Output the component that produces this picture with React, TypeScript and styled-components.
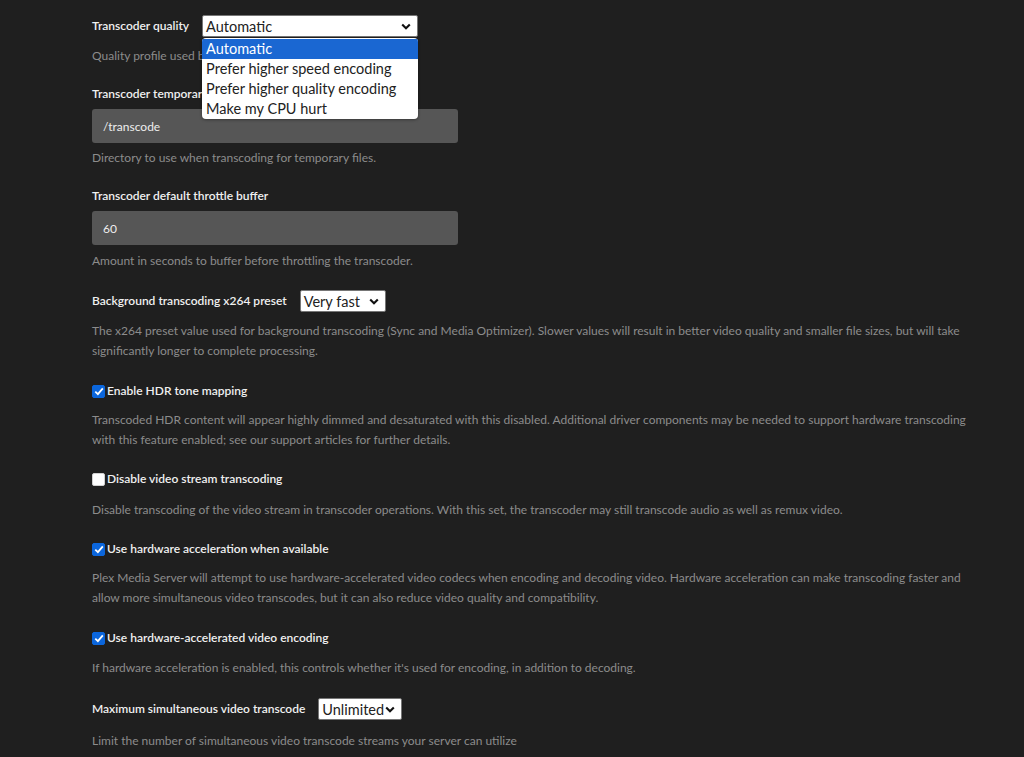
import { createGlobalStyle } from 'styled-components'
import styled from 'styled-components'

const GlobalStyle = createGlobalStyle`
    html, body {
        margin: 0;
        padding: 0;
        background: #1f1f1f;
    }
    body {
        font-family: Lato, "Open Sans", sans-serif;
        -webkit-font-smoothing: antialiased;
    }
`

const Page = styled.div`
    min-height: 757px;
    box-sizing: border-box;
    padding: 15px 0 0 92px;
    width: 985px;
    position: relative;
`

const Field = styled.div<{ $space?: number }>`
    display: flex;
    flex-direction: column;
    margin-bottom: ${p => p.$space ?? 19}px;
`

const Row = styled.div`
    display: flex;
    align-items: center;
    gap: 13px;
    height: 22px;
`

const Label = styled.label`
    display: flex;
    align-items: center;
    gap: 2px;
    color: #f0f0f0;
    font-size: 12px;
    font-weight: 600;
    line-height: 20px;
`

const Description = styled.div<{ $gap?: number }>`
    margin-top: ${p => p.$gap ?? 9}px;
    color: #8c8c8c;
    font-size: 12px;
    line-height: 20px;
`

const TextInput = styled.div`
    margin-top: 5px;
    width: 366px;
    height: 34px;
    box-sizing: border-box;
    padding: 0 11px;
    display: flex;
    align-items: center;
    background: #565656;
    border-radius: 3px;
    color: #eeeeee;
    font-size: 12px;
`

const SelectBox = styled.div<{ $width: number }>`
    position: relative;
    width: ${p => p.$width}px;
    height: 22px;
    box-sizing: border-box;
    padding: 0 6px 0 3px;
    display: flex;
    align-items: center;
    justify-content: space-between;
    background: #ffffff;
    border: 1px solid #767676;
    border-radius: 2px;
    color: #222222;
    font-size: 14.5px;
`

const Menu = styled.div`
    position: absolute;
    top: 22px;
    left: -1px;
    width: 216px;
    padding: 1px 0 0;
    background: #ffffff;
    border-radius: 4px;
    overflow: hidden;
    box-shadow: 0 1px 3px rgba(0, 0, 0, 0.35);
    z-index: 2;
`

const MenuItem = styled.div<{ $active?: boolean }>`
    height: 20px;
    line-height: 20px;
    padding: 0 4px;
    font-size: 14.5px;
    color: ${p => (p.$active ? '#ffffff' : '#222222')};
    background: ${p => (p.$active ? '#1a67d2' : 'transparent')};
`

const Box = styled.span<{ $checked?: boolean }>`
    width: 13px;
    height: 13px;
    box-sizing: border-box;
    border-radius: 2px;
    display: inline-flex;
    align-items: center;
    justify-content: center;
    background: ${p => (p.$checked ? '#0b66dc' : '#ffffff')};
    border: 1px solid ${p => (p.$checked ? '#0b66dc' : '#d0d0d0')};
`

function Chevron() {
    return (
        <svg width="10" height="7" viewBox="0 0 10 7">
            <path d="M1.2 1.4 L5 5.2 L8.8 1.4" fill="none" stroke="#111" strokeWidth="2.1" />
        </svg>
    )
}

function Select({ value, width, children }: { value: string; width: number; children?: React.ReactNode }) {
    return (
        <SelectBox $width={width}>
            <span>{value}</span>
            <Chevron />
            {children}
        </SelectBox>
    )
}

function Checkbox({ checked, label }: { checked?: boolean; label: string }) {
    return (
        <Label>
            <Box $checked={checked}>
                {checked && (
                    <svg width="10" height="9" viewBox="0 0 10 9">
                        <path d="M1.3 4.6 L3.9 7.1 L8.8 1.4" fill="none" stroke="#fff" strokeWidth="1.8" />
                    </svg>
                )}
            </Box>
            {label}
        </Label>
    )
}

const qualityOptions = [
    'Automatic',
    'Prefer higher speed encoding',
    'Prefer higher quality encoding',
    'Make my CPU hurt',
]

export default function App() {
    return (
        <>
            <GlobalStyle />
            <Page>
                <Field $space={18}>
                    <Row>
                        <Label>Transcoder quality</Label>
                        <Select value="Automatic" width={216}>
                            <Menu>
                                {qualityOptions.map((o, i) => (
                                    <MenuItem key={o} $active={i === 0}>{o}</MenuItem>
                                ))}
                            </Menu>
                        </Select>
                    </Row>
                    <Description>Quality profile used by the transcoder.</Description>
                </Field>

                <Field $space={18}>
                    <Label>Transcoder temporary directory</Label>
                    <TextInput>/transcode</TextInput>
                    <Description $gap={5}>Directory to use when transcoding for temporary files.</Description>
                </Field>

                <Field>
                    <Label>Transcoder default throttle buffer</Label>
                    <TextInput>60</TextInput>
                    <Description $gap={6}>Amount in seconds to buffer before throttling the transcoder.</Description>
                </Field>

                <Field $space={20}>
                    <Row>
                        <Label>Background transcoding x264 preset</Label>
                        <Select value="Very fast" width={86} />
                    </Row>
                    <Description>
                        The x264 preset value used for background transcoding (Sync and Media Optimizer). Slower values will result in better video quality and smaller file sizes, but will take significantly longer to complete processing.
                    </Description>
                </Field>

                <Field>
                    <Checkbox checked label="Enable HDR tone mapping" />
                    <Description>
                        Transcoded HDR content will appear highly dimmed and desaturated with this disabled. Additional driver components may be needed to support hardware transcoding with this feature enabled; see our support articles for further details.
                    </Description>
                </Field>

                <Field>
                    <Checkbox label="Disable video stream transcoding" />
                    <Description $gap={11}>
                        Disable transcoding of the video stream in transcoder operations. With this set, the transcoder may still transcode audio as well as remux video.
                    </Description>
                </Field>

                <Field $space={20}>
                    <Checkbox checked label="Use hardware acceleration when available" />
                    <Description>
                        Plex Media Server will attempt to use hardware-accelerated video codecs when encoding and decoding video. Hardware acceleration can make transcoding faster and allow more simultaneous video transcodes, but it can also reduce video quality and compatibility.
                    </Description>
                </Field>

                <Field $space={20}>
                    <Checkbox checked label="Use hardware-accelerated video encoding" />
                    <Description $gap={10}>
                        If hardware acceleration is enabled, this controls whether it's used for encoding, in addition to decoding.
                    </Description>
                </Field>

                <Field>
                    <Row>
                        <Label>Maximum simultaneous video transcode</Label>
                        <Select value="Unlimited" width={84} />
                    </Row>
                    <Description $gap={11}>
                        Limit the number of simultaneous video transcode streams your server can utilize
                    </Description>
                </Field>
            </Page>
        </>
    )
}
